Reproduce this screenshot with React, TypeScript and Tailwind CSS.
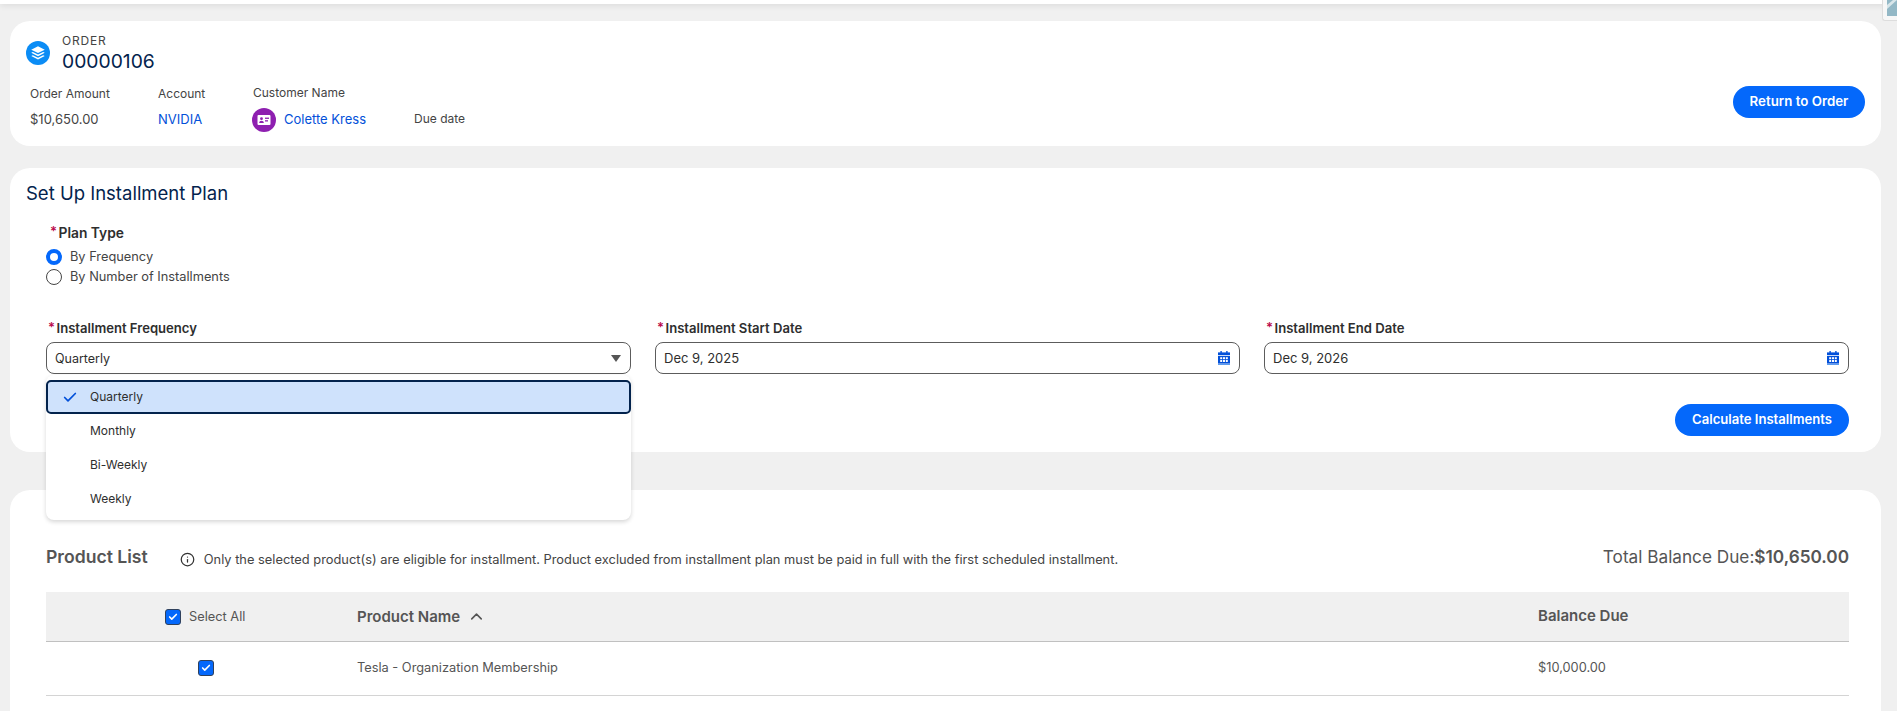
import { Check, ChevronUp, Info } from "lucide-react"

const fieldLabel = "flex items-center h-[20px] pl-[2px] text-[13.1px] font-semibold text-[#2e2e2e]"

function Star() {
  return <span className="text-[#ba0a4c] text-[13px] font-semibold mr-[1.5px] -mt-[3px]">*</span>
}

function LayersIcon() {
  return (
    <div className="w-[24px] h-[24px] rounded-full bg-[#0b8cf5] flex items-center justify-center shrink-0">
      <svg viewBox="0 0 16 16" className="w-[18px] h-[18px]" fill="#fff">
        <path d="M8 2 14 5 8 8 2 5Z" />
        <path d="M3.4 7 8 9.3 12.6 7 14 7.8 8 10.8 2 7.8Z" />
        <path d="M3.4 9.9 8 12.2 12.6 9.9 14 10.7 8 13.7 2 10.7Z" />
      </svg>
    </div>
  )
}

function ContactIcon() {
  return (
    <div className="w-[24px] h-[24px] rounded-full bg-[#8e1fb0] flex items-center justify-center shrink-0">
      <svg viewBox="0 0 16 16" className="w-[16px] h-[16px]">
        <rect x="1.5" y="3" width="13" height="10" rx="1" fill="#fff" />
        <circle cx="5.5" cy="6.7" r="1.4" fill="#8e1fb0" />
        <path d="M3.2 11c0-1.5 1-2.3 2.3-2.3s2.3.8 2.3 2.3Z" fill="#8e1fb0" />
        <rect x="9" y="5.6" width="4" height="1.3" fill="#8e1fb0" />
        <rect x="9" y="8.2" width="3" height="1.3" fill="#8e1fb0" />
      </svg>
    </div>
  )
}

function CalendarIcon() {
  return (
    <svg viewBox="0 0 12 14" className="w-[12px] h-[14px] shrink-0">
      <rect x="2.4" y="0" width="1.4" height="2.4" fill="#0250d9" />
      <rect x="8.2" y="0" width="1.4" height="2.4" fill="#0250d9" />
      <rect x="0" y="1.4" width="12" height="2.8" fill="#0250d9" />
      <rect x="0" y="5" width="12" height="7.6" fill="#0250d9" />
      <rect x="0" y="13" width="12" height="1" fill="#5b9cf0" />
      {[2.2, 5, 7.8].map((x) =>
        [6.2, 9].map((y) => <rect key={`${x}-${y}`} x={x} y={y} width="2" height="2" fill="#fff" />)
      )}
    </svg>
  )
}

function Checkbox() {
  return (
    <div className="w-[16px] h-[16px] rounded-[3px] bg-[#0468fb] border border-[#30415c] flex items-center justify-center shrink-0">
      <Check className="w-[10px] h-[10px] text-white" strokeWidth={4} />
    </div>
  )
}

function DateField({ label, value }: { label: string; value: string }) {
  return (
    <div>
      <div className={fieldLabel}>
        <Star />
        {label}
      </div>
      <div className="mt-[3px] h-[32px] border border-[#5c5c5c] rounded-[8px] flex items-center justify-between pl-[8px] pr-[9px] text-[13px] text-[#2e2e2e]">
        <span className="mt-[1px]">{value}</span>
        <CalendarIcon />
      </div>
    </div>
  )
}

export default function App() {
  const options = ["Quarterly", "Monthly", "Bi-Weekly", "Weekly"]

  return (
    <div
      className="relative w-full h-[711px] overflow-hidden bg-[#f0f0f0] flex flex-col"
      style={{ fontFamily: "Inter, 'Noto Sans', sans-serif" }}
    >
      <div className="h-[4px] bg-white shadow-[0_1px_6px_rgba(0,0,0,0.12)] shrink-0" />

      {/* corner tab */}
      <div className="absolute right-0 top-0 w-[15px] h-[21px] bg-[#f7f7f7] border-l border-b border-[#dddddd] rounded-bl-[3px] pl-[4px] pb-[4px]">
        <svg viewBox="0 0 10 16" className="w-full h-full" preserveAspectRatio="none">
          <rect width="10" height="16" fill="#93b8c6" />
          <path d="M0 5 6 0H10L0 9Z" fill="#d8e6ea" />
        </svg>
      </div>

      <div className="ml-[10px] mr-[16px] flex flex-col flex-1 min-h-0">
        {/* order header */}
        <div className="mt-[17px] h-[125px] bg-white rounded-[20px] flex justify-between items-end pr-[16px] pb-[28px] shrink-0">
          <div className="self-start pt-[12px]">
            <div className="flex items-center gap-[12px] pl-[16px]">
              <LayersIcon />
              <div>
                <div className="text-[12px] leading-[16px] tracking-[0.8px] text-[#444444]">ORDER</div>
                <div className="text-[19.3px] leading-[24px] text-[#03234d]">00000106</div>
              </div>
            </div>
            <div className="flex mt-[11px] pl-[20px] text-[12px] text-[#444444]">
              <div className="w-[128px]">
                <div className="h-[18px] leading-[20px]">Order Amount</div>
                <div className="mt-[6px] h-[24px] leading-[22px] text-[13px]">$10,650.00</div>
              </div>
              <div className="w-[95px]">
                <div className="h-[18px] leading-[20px]">Account</div>
                <div className="mt-[6px] h-[24px] leading-[22px] text-[13px] text-[#0250d9]">NVIDIA</div>
              </div>
              <div className="w-[161px]">
                <div className="h-[18px] leading-[18px]">Customer Name</div>
                <div className="mt-[6px] h-[24px] flex items-center gap-[8px] -ml-px text-[13px] text-[#0250d9]">
                  <ContactIcon />
                  Colette Kress
                </div>
              </div>
              <div>
                <div className="h-[18px]" />
                <div className="mt-[6px] h-[24px] leading-[22px]">Due date</div>
              </div>
            </div>
          </div>
          <button className="h-[32px] w-[132px] rounded-full bg-[#0468fb] text-white text-[13.3px] font-semibold">
            Return to Order
          </button>
        </div>

        {/* plan form */}
        <div className="mt-[22px] h-[284px] bg-white rounded-[20px] pt-[11px] shrink-0">
          <div className="pl-[16px] text-[18.5px] leading-[28px] text-[#03234d]">Set Up Installment Plan</div>
          <div className="mt-[16px] pl-[40px] flex items-center h-[20px] text-[13.8px] font-semibold text-[#2e2e2e]">
            <Star />
            Plan Type
          </div>
          <div className="mt-[4px] pl-[36px] text-[12.8px] text-[#444444]">
            <div className="h-[20px] flex items-center gap-[8px]">
              <div className="w-[16px] h-[16px] rounded-full border-[4px] border-[#0468fb] bg-white" />
              By Frequency
            </div>
            <div className="h-[20px] flex items-center gap-[8px]">
              <div className="w-[16px] h-[16px] rounded-full border border-[#444444] bg-white" />
              By Number of Installments
            </div>
          </div>

          <div className="mt-[32px] pl-[36px] pr-[32px] grid grid-cols-3 gap-x-[24px]">
            <div className="relative">
              <div className={fieldLabel}>
                <Star />
                Installment Frequency
              </div>
              <div className="mt-[3px] h-[32px] border border-[#5c5c5c] rounded-[8px] flex items-center justify-between pl-[8px] pr-[9px] text-[12.5px] text-[#2e2e2e]">
                <span className="mt-[2px]">Quarterly</span>
                <svg viewBox="0 0 10 7" className="w-[10px] h-[7px]" fill="#555555">
                  <path d="M0 0H10L5 7Z" />
                </svg>
              </div>
              {/* open listbox */}
              <div className="absolute z-10 left-0 right-0 top-[56px] bg-white rounded-[8px] shadow-[0_2px_4px_rgba(0,0,0,0.16)] pt-[5px] pb-[4px] text-[12px] text-[#2e2e2e]">
                {options.map((o, i) => (
                  <div
                    key={o}
                    className={
                      i === 0
                        ? "h-[34px] flex items-center pl-[14px] border-2 border-[#03234d] rounded-[5px] bg-[#cfe2fc]"
                        : "h-[34px] flex items-center pl-[14px] border-2 border-transparent"
                    }
                  >
                    <div className="w-[16px] flex justify-center">
                      {i === 0 && <Check className="w-[17px] h-[17px] text-[#0250d9]" strokeWidth={2.6} />}
                    </div>
                    <span className="ml-[12px]">{o}</span>
                  </div>
                ))}
              </div>
            </div>
            <DateField label="Installment Start Date" value="Dec 9, 2025" />
            <DateField label="Installment End Date" value="Dec 9, 2026" />
          </div>

          <div className="mt-[30px] pr-[32px] flex justify-end">
            <button className="h-[32px] w-[174px] rounded-full bg-[#0468fb] text-white text-[13.1px] font-semibold">
              Calculate Installments
            </button>
          </div>
        </div>

        {/* product list */}
        <div className="mt-[38px] flex-1 bg-white rounded-t-[20px] pt-[53px] pl-[36px] pr-[32px]">
          <div className="h-[28px] flex items-center justify-between">
            <div className="flex items-center">
              <span className="text-[17.6px] font-semibold text-[#555555]">Product List</span>
              <div className="ml-[32px] mt-[5px] flex items-center gap-[9px] text-[12.85px] text-[#444444]">
                <Info className="w-[15px] h-[15px] text-[#333333]" strokeWidth={2} />
                Only the selected product(s) are eligible for installment. Product excluded from installment plan must be paid in full with the first scheduled installment.
              </div>
            </div>
            <div className="text-[17.2px] text-[#555555]">
              Total Balance Due:<span className="font-semibold">$10,650.00</span>
            </div>
          </div>

          <div className="mt-[21px] h-[50px] bg-[#f0f0f0] border-b border-[#c0c0c0] grid grid-cols-[311px_1181px_1fr] items-center text-[#555555]">
            <div className="pl-[119px] flex items-center gap-[8px] text-[12.8px]">
              <Checkbox />
              Select All
            </div>
            <div className="flex items-center gap-[7px] text-[15px] font-semibold">
              <span className="mt-[1px]">Product Name</span>
              <ChevronUp className="w-[19px] h-[19px]" strokeWidth={2} />
            </div>
            <div className="text-[15px] font-semibold">Balance Due</div>
          </div>
          <div className="h-[54px] pb-[2px] border-b border-[#d4d4d4] grid grid-cols-[311px_1181px_1fr] items-center text-[12.8px] text-[#555555]">
            <div className="pl-[152px]">
              <Checkbox />
            </div>
            <div>Tesla - Organization Membership</div>
            <div>$10,000.00</div>
          </div>
        </div>
      </div>
    </div>
  )
}
